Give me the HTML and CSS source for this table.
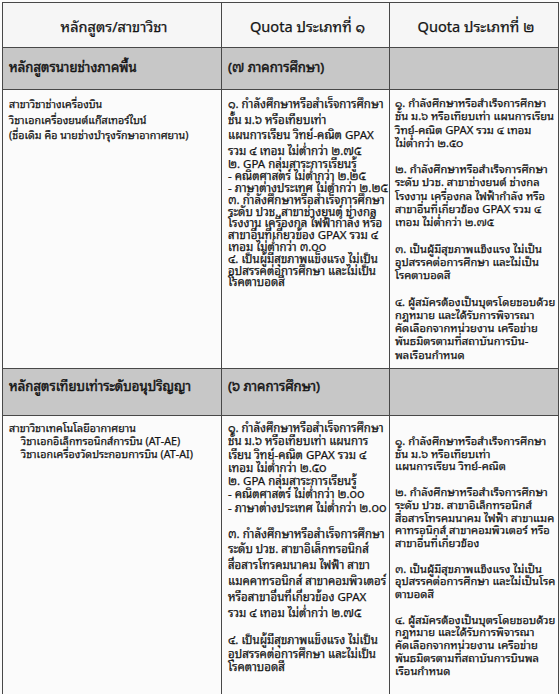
FILE: index.html
```html
<!DOCTYPE html>
<html lang="th">
<head>
<meta charset="utf-8">
<title>Quota</title>
<link rel="stylesheet" href="styles.css">
</head>
<body>
<div class="page">
<table class="grid">
  <colgroup><col class="c1"><col class="c2"><col class="c3"></colgroup>
  <tr class="head">
    <th>หลักสูตร/สาขาวิชา</th>
    <th>Quota ประเภทที่ ๑</th>
    <th>Quota ประเภทที่ ๒</th>
  </tr>
  <tr class="band band1">
    <td>หลักสูตรนายช่างภาคพื้น</td>
    <td>(๗ ภาคการศึกษา)</td>
    <td></td>
  </tr>
  <tr class="body body1">
    <td class="name">
      <div class="ln wide">สาขาวิชาช่างเครื่องบิน</div>
      <div class="ln wide">วิชาเอกเครื่องยนต์แก๊สเทอร์ไบน์</div>
      <div class="ln wide">(ชื่อเดิม คือ นายช่างบำรุงรักษาอากาศยาน)</div>
    </td>
    <td class="q1">
      <div class="ln wide">๑. กำลังศึกษาหรือสำเร็จการศึกษา</div>
      <div class="ln wide">ชั้น ม.๖ หรือเทียบเท่า</div>
      <div class="ln wide">แผนการเรียน วิทย์-คณิต GPAX</div>
      <div class="ln wide">รวม ๔ เทอม ไม่ต่ำกว่า ๒.๗๕</div>
      <div class="ln tight">๒. GPA กลุ่มสาระการเรียนรู้</div>
      <div class="ln tight">- คณิตศาสตร์ ไม่ต่ำกว่า ๒.๒๕</div>
      <div class="ln tight">- ภาษาต่างประเทศ ไม่ต่ำกว่า ๒.๒๕</div>
      <div class="ln tight">๓. กำลังศึกษาหรือสำเร็จการศึกษา</div>
      <div class="ln tight">ระดับ ปวช. สาขาช่างยนต์ ช่างกล</div>
      <div class="ln tight">โรงงาน เครื่องกล ไฟฟ้ากำลัง หรือ</div>
      <div class="ln tight">สาขาอื่นที่เกี่ยวข้อง GPAX รวม ๔</div>
      <div class="ln tight">เทอม ไม่ต่ำกว่า ๓.๐๐</div>
      <div class="ln tight">๔. เป็นผู้มีสุขภาพแข็งแรง ไม่เป็น</div>
      <div class="ln tight">อุปสรรคต่อการศึกษา และไม่เป็น</div>
      <div class="ln tight">โรคตาบอดสี</div>
    </td>
    <td class="q2">
      <div class="ln">๑. กำลังศึกษาหรือสำเร็จการศึกษา</div>
      <div class="ln">ชั้น ม.๖ หรือเทียบเท่า แผนการเรียน</div>
      <div class="ln">วิทย์-คณิต GPAX รวม ๔ เทอม</div>
      <div class="ln">ไม่ต่ำกว่า ๒.๕๐</div>
      <div class="ln gap">๒. กำลังศึกษาหรือสำเร็จการศึกษา</div>
      <div class="ln">ระดับ ปวช. สาขาช่างยนต์ ช่างกล</div>
      <div class="ln">โรงงาน เครื่องกล ไฟฟ้ากำลัง หรือ</div>
      <div class="ln">สาขาอื่นที่เกี่ยวข้อง GPAX รวม ๔</div>
      <div class="ln">เทอม ไม่ต่ำกว่า ๒.๗๕</div>
      <div class="ln gap">๓. เป็นผู้มีสุขภาพแข็งแรง ไม่เป็น</div>
      <div class="ln">อุปสรรคต่อการศึกษา และไม่เป็น</div>
      <div class="ln">โรคตาบอดสี</div>
      <div class="ln gap">๔. ผู้สมัครต้องเป็นบุตรโดยชอบด้วย</div>
      <div class="ln">กฎหมาย และได้รับการพิจารณา</div>
      <div class="ln">คัดเลือกจากหน่วยงาน เครือข่าย</div>
      <div class="ln">พันธมิตรตามที่สถาบันการบิน-</div>
      <div class="ln">พลเรือนกำหนด</div>
    </td>
  </tr>
  <tr class="band band2">
    <td>หลักสูตรเทียบเท่าระดับอนุปริญญา</td>
    <td>(๖ ภาคการศึกษา)</td>
    <td></td>
  </tr>
  <tr class="body body2">
    <td class="name">
      <div class="ln mid">สาขาวิชาเทคโนโลยีอากาศยาน</div>
      <div class="ln mid indent">วิชาเอกอิเล็กทรอนิกส์การบิน (AT-AE)</div>
      <div class="ln mid indent">วิชาเอกเครื่องวัดประกอบการบิน (AT-AI)</div>
    </td>
    <td class="q1">
      <div class="ln">๑. กำลังศึกษาหรือสำเร็จการศึกษา</div>
      <div class="ln">ชั้น ม.๖ หรือเทียบเท่า แผนการ</div>
      <div class="ln">เรียน วิทย์-คณิต GPAX รวม ๔</div>
      <div class="ln">เทอม ไม่ต่ำกว่า ๒.๕๐</div>
      <div class="ln">๒. GPA กลุ่มสาระการเรียนรู้</div>
      <div class="ln">- คณิตศาสตร์ ไม่ต่ำกว่า ๒.๐๐</div>
      <div class="ln">- ภาษาต่างประเทศ ไม่ต่ำกว่า ๒.๐๐</div>
      <div class="ln gap">๓. กำลังศึกษาหรือสำเร็จการศึกษา</div>
      <div class="ln loose">ระดับ ปวช. สาขาอิเล็กทรอนิกส์</div>
      <div class="ln loose">สื่อสารโทรคมนาคม ไฟฟ้า สาขา</div>
      <div class="ln loose">แมคคาทรอนิกส์ สาขาคอมพิวเตอร์</div>
      <div class="ln loose">หรือสาขาอื่นที่เกี่ยวข้อง GPAX</div>
      <div class="ln loose">รวม ๔ เทอม ไม่ต่ำกว่า ๒.๗๕</div>
      <div class="ln gap">๔. เป็นผู้มีสุขภาพแข็งแรง ไม่เป็น</div>
      <div class="ln">อุปสรรคต่อการศึกษา และไม่เป็น</div>
      <div class="ln">โรคตาบอดสี</div>
    </td>
    <td class="q2 late">
      <div class="ln">๑. กำลังศึกษาหรือสำเร็จการศึกษา</div>
      <div class="ln">ชั้น ม.๖ หรือเทียบเท่า</div>
      <div class="ln">แผนการเรียน วิทย์-คณิต</div>
      <div class="ln gap">๒. กำลังศึกษาหรือสำเร็จการศึกษา</div>
      <div class="ln">ระดับ ปวช. สาขาอิเล็กทรอนิกส์</div>
      <div class="ln">สื่อสารโทรคมนาคม ไฟฟ้า สาขาแมค</div>
      <div class="ln">คาทรอนิกส์ สาขาคอมพิวเตอร์ หรือ</div>
      <div class="ln">สาขาอื่นที่เกี่ยวข้อง</div>
      <div class="ln gap">๓. เป็นผู้มีสุขภาพแข็งแรง ไม่เป็น</div>
      <div class="ln">อุปสรรคต่อการศึกษา และไม่เป็นโรค</div>
      <div class="ln">ตาบอดสี</div>
      <div class="ln gap">๔. ผู้สมัครต้องเป็นบุตรโดยชอบด้วย</div>
      <div class="ln">กฎหมาย และได้รับการพิจารณา</div>
      <div class="ln">คัดเลือกจากหน่วยงาน เครือข่าย</div>
      <div class="ln">พันธมิตรตามที่สถาบันการบินพล</div>
      <div class="ln">เรือนกำหนด</div>
    </td>
  </tr>
</table>
</div>
</body>
</html>
```
FILE: styles.css
```css
html, body {
  margin: 0;
  padding: 0;
  background: #fbfbfb;
}
.page {
  padding: 2px 2px 0 2px;
}
.grid {
  width: 556px;
  border-collapse: collapse;
  table-layout: fixed;
  font-family: "Noto Sans Thai Looped", "Noto Sans Thai", "Tahoma", "Loma", "Garuda", "Noto Sans", "DejaVu Sans", sans-serif;
  font-size: 11.5px;
  font-weight: 400;
  color: #141414;
  -webkit-text-stroke: 0.25px #141414;
}
.c1 { width: 219px; }
.c2 { width: 168px; }
.c3 { width: 169px; }
.grid th,
.grid td {
  border: 1.5px solid #484848;
  vertical-align: top;
  text-align: left;
  padding: 0 2px 0 6px;
}
.head th {
  height: 44px;
  vertical-align: middle;
  text-align: center;
  font-weight: 400;
  font-size: 14.6px;
  background: #f6f6f6;
}
.band td {
  background: #c7c7c7;
  font-size: 13.2px;
  -webkit-text-stroke: 0.45px #141414;
  padding-top: 7px;
}
.band1 td { height: 34px; }
.band2 td { height: 41px; padding-top: 5px; }
.body1 td { height: 272px; padding-top: 6px; }
.body2 td { height: 280px; padding-top: 5px; }
.grid td.q2 { font-size: 11.2px; padding-left: 5px; }
.ln {
  line-height: 13.3px;
  white-space: nowrap;
}
.ln.wide { line-height: 15.6px; }
.ln.tight { line-height: 11.8px; }
.ln.mid { line-height: 13px; }
.ln.loose { line-height: 16px; }
.ln.gap { margin-top: 13px; }
.ln.indent { padding-left: 12px; }
.name .ln { font-size: 10.7px; }
.grid td.late { padding-top: 18px; }
.late .ln { line-height: 12.7px; }
```
